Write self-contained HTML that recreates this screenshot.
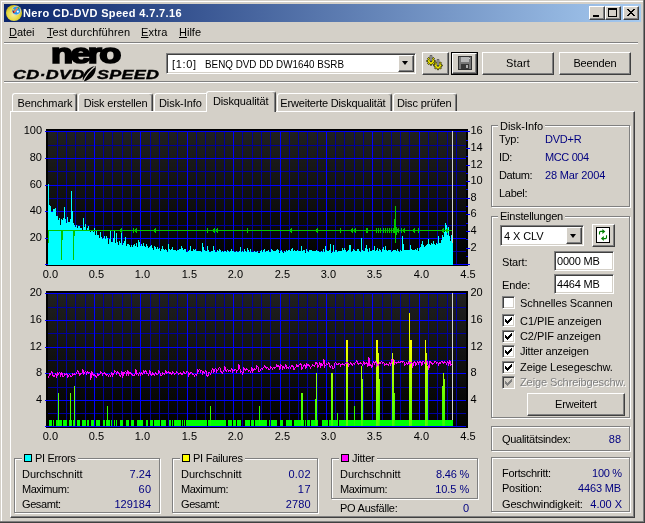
<!DOCTYPE html>
<html lang="de"><head><meta charset="utf-8"><title>Nero CD-DVD Speed 4.7.7.16</title>
<style>
html,body{margin:0;padding:0}
body{width:645px;height:523px;overflow:hidden;background:#D4D0C8;position:relative;font-family:"Liberation Sans",sans-serif;font-size:11px;color:#000}
.r,.t,.rb,.sk,.gw,.gg,.tab,.page,.arr{position:absolute}
.t{white-space:nowrap;line-height:13px;font-size:11px;will-change:opacity}
.ttl{color:#fff;font-weight:bold;font-size:11px}
.mn u{text-decoration:underline}
.nv{color:#000080}
.gt{background:rgba(212,208,200,.992)}
.nero{font-weight:bold;font-size:27px;line-height:36px;letter-spacing:-2px;-webkit-text-stroke:1.7px #000;transform:scaleX(1.34);transform-origin:0 0}
.cds{font-weight:bold;font-style:italic;font-size:13px;line-height:14px;letter-spacing:0.2px;-webkit-text-stroke:0.4px #000;transform:scaleX(1.38);transform-origin:0 0}
.rb{box-sizing:border-box;background:#D4D0C8;border:1px solid;border-color:#fff #404040 #404040 #fff;box-shadow:inset -1px -1px 0 #808080, inset 1px 1px 0 #D4D0C8}
.sk{box-sizing:border-box;background:#fff;border:1px solid;border-color:#808080 #fff #fff #808080;box-shadow:inset 1px 1px 0 #404040, inset -1px -1px 0 #D4D0C8}
.gw{box-sizing:border-box;border:1px solid #fff}
.gg{box-sizing:border-box;border:1px solid #808080}
.arr{width:0;height:0;border-left:3.5px solid transparent;border-right:3.5px solid transparent;border-top:4px solid #000}
.tab{box-sizing:border-box;background:#D4D0C8;border-top:1px solid #fff;border-left:1px solid #fff;border-right:1px solid #404040;border-radius:3px 3px 0 0;box-shadow:inset -1px 0 0 #808080}
.page{box-sizing:border-box;background:#D4D0C8;border:1px solid;border-color:#fff #404040 #404040 #fff;box-shadow:inset -1px -1px 0 #808080}
</style></head>
<body>
<div class="r" style="left:1px;top:1px;width:642px;height:1px;background:#fff"></div>
<div class="r" style="left:1px;top:1px;width:1px;height:520px;background:#fff"></div>
<div class="r" style="left:643px;top:0px;width:1px;height:522px;background:#808080"></div>
<div class="r" style="left:644px;top:0px;width:1px;height:523px;background:#404040"></div>
<div class="r" style="left:0px;top:521px;width:644px;height:1px;background:#808080"></div>
<div class="r" style="left:0px;top:522px;width:645px;height:1px;background:#404040"></div>
<div class="r" style="left:4px;top:4px;width:637px;height:18px;background:linear-gradient(to right,#0A246A,#A6CAF0)"></div>
<svg class="r" style="left:5px;top:4px" width="18" height="18" viewBox="5 4 18 18">
<defs><radialGradient id="cdg" cx="0.45" cy="0.6" r="0.6"><stop offset="0" stop-color="#f4eca0"/><stop offset="0.55" stop-color="#e8dc48"/><stop offset="1" stop-color="#c8b818"/></radialGradient></defs>
<circle cx="14" cy="13" r="8" fill="url(#cdg)"/>
<circle cx="16.3" cy="10.6" r="4.6" fill="#c8ccd8"/><circle cx="16.3" cy="10.6" r="3.8" fill="#2898e8"/>
<path d="M13.2 12.2 L17.5 6.8 L18.6 7.8 L14.6 13 Z" fill="#ff7848"/>
<path d="M17 7 L19.6 7.6 L19 9.6 Z" fill="#30a040"/>
<path d="M12.8 10 L14.6 12.6 L13.6 13.2 L12.6 11.4Z" fill="#901010"/>
<circle cx="13.4" cy="9.6" r="0.8" fill="#ffe000"/>
<circle cx="17.8" cy="11.6" r="1.1" fill="#ffffff"/>
</svg>
<span class="t ttl" style="left:23px;top:7px;letter-spacing:0.35px;">Nero CD-DVD Speed 4.7.7.16</span>
<div class="rb " style="left:589px;top:6px;width:16px;height:14px;"><div class="r" style="left:3px;top:8px;width:6px;height:2px;background:#000"></div></div>
<div class="rb " style="left:605px;top:6px;width:16px;height:14px;"><div class="r" style="left:2px;top:1px;width:9px;height:9px;box-sizing:border-box;border:1px solid #000;border-top-width:2px"></div></div>
<div class="rb " style="left:623px;top:6px;width:16px;height:14px;"><svg class="r" style="left:3px;top:2px" width="8" height="7" viewBox="0 0 8 7" shape-rendering="crispEdges"><path d="M0 0h2v1h-2zM6 0h2v1h-2zM1 1h2v1h-2zM5 1h2v1h-2zM2 2h4v1h-4zM3 3h2v1h-2zM2 4h4v1h-4zM1 5h2v1h-2zM5 5h2v1h-2zM0 6h2v1h-2zM6 6h2v1h-2z" fill="#000"/></svg></div>
<span class="t mn" style="left:9px;top:26px;letter-spacing:-0.04px;"><u>D</u>atei</span>
<span class="t mn" style="left:47px;top:26px;letter-spacing:0.07px;"><u>T</u>est durchführen</span>
<span class="t mn" style="left:141px;top:26px;letter-spacing:0.16px;"><u>E</u>xtra</span>
<span class="t mn" style="left:179px;top:26px;letter-spacing:-0.00px;"><u>H</u>ilfe</span>
<div class="r" style="left:4px;top:42px;width:634px;height:1px;background:#808080"></div>
<div class="r" style="left:4px;top:43px;width:634px;height:1px;background:#fff"></div>
<div class="r" style="left:4px;top:81px;width:634px;height:1px;background:#808080"></div>
<div class="r" style="left:4px;top:82px;width:634px;height:1px;background:#fff"></div>
<span class="t nero" style="left:51px;top:35.5px">nero</span>
<span class="t cds" style="left:13px;top:68px">CD·DVD</span>
<span class="t cds" style="left:97px;top:68px">SPEED</span>
<svg class="r" style="left:80px;top:65px" width="18" height="17" viewBox="0 0 18 17"><path d="M3 16.5 C1.5 10 6.5 2.5 15.5 1 C17 7 12 15 3 16.5Z" fill="#000"/><path d="M3 16.5 C6 10.5 10 5.5 15 1.5" stroke="#D4D0C8" stroke-width="1.2" fill="none"/></svg>
<div class="sk " style="left:166px;top:53px;width:250px;height:21px;"></div>
<span class="t mn" style="left:172px;top:58px;letter-spacing:0.66px;">[1:0]</span>
<span class="t mn" style="left:205px;top:58px;transform:scaleX(0.895);transform-origin:0 0;">BENQ DVD DD DW1640 BSRB</span>
<div class="rb " style="left:398px;top:55px;width:16px;height:17px;"><div class="arr" style="left:3px;top:5px"></div></div>
<div class="rb " style="left:422px;top:52px;width:27px;height:23px;"><svg class="r" style="left:0px;top:0px" width="25" height="21" viewBox="423 53 25 21">
<g fill="#f0e800" stroke="#282800" stroke-width="0.9"><polygon points="435.26,60.40 435.26,61.60 434.00,61.80 433.68,62.55 434.44,63.59 433.59,64.44 432.55,63.68 431.80,64.00 431.60,65.26 430.40,65.26 430.20,64.00 429.45,63.68 428.41,64.44 427.56,63.59 428.32,62.55 428.00,61.80 426.74,61.60 426.74,60.40 428.00,60.20 428.32,59.45 427.56,58.41 428.41,57.56 429.45,58.32 430.20,58.00 430.40,56.74 431.60,56.74 431.80,58.00 432.55,58.32 433.59,57.56 434.44,58.41 433.68,59.45 434.00,60.20"/><polygon points="442.26,64.90 442.26,66.10 441.00,66.30 440.68,67.05 441.44,68.09 440.59,68.94 439.55,68.18 438.80,68.50 438.60,69.76 437.40,69.76 437.20,68.50 436.45,68.18 435.41,68.94 434.56,68.09 435.32,67.05 435.00,66.30 433.74,66.10 433.74,64.90 435.00,64.70 435.32,63.95 434.56,62.91 435.41,62.06 436.45,62.82 437.20,62.50 437.40,61.24 438.60,61.24 438.80,62.50 439.55,62.82 440.59,62.06 441.44,62.91 440.68,63.95 441.00,64.70"/></g>
<circle cx="431" cy="61" r="1.3" fill="#404020"/><circle cx="438" cy="65.5" r="1.3" fill="#404020"/>
<path d="M430 55.5h2v5.5h-2z M437 59.5h2v6h-2z" fill="#a8a8a8" stroke="#383838" stroke-width=".6"/></svg></div>
<div class="r" style="left:451px;top:52px;width:27px;height:23px;box-sizing:border-box;border:1px solid #000"></div>
<div class="rb " style="left:452px;top:53px;width:25px;height:21px;"><svg class="r" style="left:5px;top:2px" width="14" height="14" viewBox="0 0 14 14" shape-rendering="crispEdges">
<rect x="0.5" y="0.5" width="13" height="13" fill="#787878" stroke="#303030"/><rect x="3" y="1" width="8" height="5" fill="#b8b8b8"/><rect x="3" y="8" width="8" height="5" fill="#383838"/><rect x="8" y="9" width="2" height="3" fill="#b0b0b0"/><rect x="11" y="2" width="1" height="1" fill="#d8d8d8"/></svg></div>
<div class="rb " style="left:482px;top:52px;width:72px;height:23px;"></div>
<span class="t mn" style="left:418.08px;width:200px;text-align:center;top:57px;letter-spacing:0.15px;">Start</span>
<div class="rb " style="left:559px;top:52px;width:72px;height:23px;"></div>
<span class="t mn" style="left:494.92px;width:200px;text-align:center;top:57px;letter-spacing:-0.16px;">Beenden</span>
<div class="tab" style="left:12px;top:93px;width:65px;height:18px"></div>
<span class="t" style="left:-55.04px;width:200px;text-align:center;top:97px;letter-spacing:-0.07px;">Benchmark</span>
<div class="tab" style="left:78px;top:93px;width:75px;height:18px"></div>
<span class="t" style="left:15.57px;width:200px;text-align:center;top:97px;letter-spacing:-0.17px;">Disk erstellen</span>
<div class="tab" style="left:154px;top:93px;width:55px;height:18px"></div>
<span class="t" style="left:80.38px;width:200px;text-align:center;top:97px;letter-spacing:-0.05px;">Disk-Info</span>
<div class="tab" style="left:277px;top:93px;width:115px;height:18px"></div>
<span class="t" style="left:232.90px;width:200px;text-align:center;top:97px;letter-spacing:-0.19px;">Erweiterte Diskqualität</span>
<div class="tab" style="left:393px;top:93px;width:64px;height:18px"></div>
<span class="t" style="left:324.20px;width:200px;text-align:center;top:97px;letter-spacing:-0.10px;">Disc prüfen</span>
<div class="page" style="left:10px;top:111px;width:625px;height:407px"></div>
<div class="tab" style="left:206px;top:91px;width:70px;height:21px"></div>
<span class="t" style="left:140.69px;width:200px;text-align:center;top:95px;letter-spacing:-0.11px;">Diskqualität</span>
<div class="r" style="left:207px;top:111px;width:67px;height:2px;background:#D4D0C8"></div>
<svg class="r" style="left:0;top:0" width="645" height="523" viewBox="0 0 645 523" shape-rendering="crispEdges">
<defs><linearGradient id="bgg" x1="0" y1="0" x2="0" y2="1"><stop offset="0" stop-color="#202020"/><stop offset="1" stop-color="#000"/></linearGradient><linearGradient id="pif" gradientUnits="userSpaceOnUse" x1="0" y1="426" x2="0" y2="326"><stop offset="0" stop-color="#00ff00"/><stop offset="0.15" stop-color="#20ff00"/><stop offset="1" stop-color="#ffff00"/></linearGradient></defs>
<rect x="46" y="129" width="422" height="137" fill="#000"/>
<rect x="48" y="131" width="418" height="134" fill="url(#bgg)"/>
<rect x="57" y="131" width="1" height="134" fill="#00009C"/>
<rect x="66" y="131" width="1" height="134" fill="#00009C"/>
<rect x="75" y="131" width="1" height="134" fill="#00009C"/>
<rect x="85" y="131" width="1" height="134" fill="#00009C"/>
<rect x="103" y="131" width="1" height="134" fill="#00009C"/>
<rect x="112" y="131" width="1" height="134" fill="#00009C"/>
<rect x="122" y="131" width="1" height="134" fill="#00009C"/>
<rect x="131" y="131" width="1" height="134" fill="#00009C"/>
<rect x="150" y="131" width="1" height="134" fill="#00009C"/>
<rect x="159" y="131" width="1" height="134" fill="#00009C"/>
<rect x="168" y="131" width="1" height="134" fill="#00009C"/>
<rect x="177" y="131" width="1" height="134" fill="#00009C"/>
<rect x="196" y="131" width="1" height="134" fill="#00009C"/>
<rect x="205" y="131" width="1" height="134" fill="#00009C"/>
<rect x="215" y="131" width="1" height="134" fill="#00009C"/>
<rect x="224" y="131" width="1" height="134" fill="#00009C"/>
<rect x="242" y="131" width="1" height="134" fill="#00009C"/>
<rect x="252" y="131" width="1" height="134" fill="#00009C"/>
<rect x="261" y="131" width="1" height="134" fill="#00009C"/>
<rect x="270" y="131" width="1" height="134" fill="#00009C"/>
<rect x="289" y="131" width="1" height="134" fill="#00009C"/>
<rect x="298" y="131" width="1" height="134" fill="#00009C"/>
<rect x="307" y="131" width="1" height="134" fill="#00009C"/>
<rect x="317" y="131" width="1" height="134" fill="#00009C"/>
<rect x="335" y="131" width="1" height="134" fill="#00009C"/>
<rect x="344" y="131" width="1" height="134" fill="#00009C"/>
<rect x="354" y="131" width="1" height="134" fill="#00009C"/>
<rect x="363" y="131" width="1" height="134" fill="#00009C"/>
<rect x="382" y="131" width="1" height="134" fill="#00009C"/>
<rect x="391" y="131" width="1" height="134" fill="#00009C"/>
<rect x="400" y="131" width="1" height="134" fill="#00009C"/>
<rect x="409" y="131" width="1" height="134" fill="#00009C"/>
<rect x="428" y="131" width="1" height="134" fill="#00009C"/>
<rect x="437" y="131" width="1" height="134" fill="#00009C"/>
<rect x="447" y="131" width="1" height="134" fill="#00009C"/>
<rect x="456" y="131" width="1" height="134" fill="#00009C"/>
<rect x="48" y="145" width="418" height="1" fill="#00009C"/>
<rect x="48" y="171" width="418" height="1" fill="#00009C"/>
<rect x="48" y="198" width="418" height="1" fill="#00009C"/>
<rect x="48" y="225" width="418" height="1" fill="#00009C"/>
<rect x="48" y="251" width="418" height="1" fill="#00009C"/>
<rect x="94" y="131" width="1" height="134" fill="#0000FF"/>
<rect x="140" y="131" width="1" height="134" fill="#0000FF"/>
<rect x="187" y="131" width="1" height="134" fill="#0000FF"/>
<rect x="233" y="131" width="1" height="134" fill="#0000FF"/>
<rect x="280" y="131" width="1" height="134" fill="#0000FF"/>
<rect x="326" y="131" width="1" height="134" fill="#0000FF"/>
<rect x="372" y="131" width="1" height="134" fill="#0000FF"/>
<rect x="419" y="131" width="1" height="134" fill="#0000FF"/>
<rect x="45" y="131" width="421" height="1" fill="#0000FF"/>
<rect x="45" y="158" width="421" height="1" fill="#0000FF"/>
<rect x="45" y="185" width="421" height="1" fill="#0000FF"/>
<rect x="45" y="211" width="421" height="1" fill="#0000FF"/>
<rect x="45" y="238" width="421" height="1" fill="#0000FF"/>
<rect x="45" y="264" width="421" height="1" fill="#0000FF"/>
<rect x="466" y="131" width="4" height="1" fill="#0000FF"/>
<rect x="466" y="140" width="2" height="1" fill="#0000FF"/>
<rect x="466" y="148" width="4" height="1" fill="#0000FF"/>
<rect x="466" y="156" width="2" height="1" fill="#0000FF"/>
<rect x="466" y="165" width="4" height="1" fill="#0000FF"/>
<rect x="466" y="173" width="2" height="1" fill="#0000FF"/>
<rect x="466" y="181" width="4" height="1" fill="#0000FF"/>
<rect x="466" y="189" width="2" height="1" fill="#0000FF"/>
<rect x="466" y="198" width="4" height="1" fill="#0000FF"/>
<rect x="466" y="206" width="2" height="1" fill="#0000FF"/>
<rect x="466" y="214" width="4" height="1" fill="#0000FF"/>
<rect x="466" y="223" width="2" height="1" fill="#0000FF"/>
<rect x="466" y="231" width="4" height="1" fill="#0000FF"/>
<rect x="466" y="239" width="2" height="1" fill="#0000FF"/>
<rect x="466" y="248" width="4" height="1" fill="#0000FF"/>
<rect x="466" y="256" width="2" height="1" fill="#0000FF"/>
<rect x="466" y="264" width="4" height="1" fill="#0000FF"/>
<path d="M48 265V184h1V205h1V206h1V212h1V212h1V209h1V209h1V208h1V216h1V216h1V220h1V218h1V225h1V219h1V220h1V218h1V207h1V219h1V223h1V217h1V222h1V222h1V219h1V191h1V211h1V223h1V225h1V227h1V225h1V228h1V226h1V226h1V228h1V228h1V230h1V218h1V227h1V224h1V230h1V228h1V226h1V231h1V232h1V231h1V231h1V232h1V228h1V235h1V230h1V235h1V235h1V238h1V232h1V237h1V239h1V238h1V236h1V239h1V236h1V238h1V244h1V239h1V231h1V242h1V242h1V238h1V230h1V243h1V233h1V242h1V245h1V241h1V243h1V232h1V245h1V243h1V241h1V237h1V246h1V244h1V244h1V245h1V247h1V245h1V247h1V245h1V244h1V246h1V243h1V247h1V240h1V242h1V246h1V244h1V246h1V243h1V246h1V247h1V244h1V246h1V248h1V247h1V246h1V245h1V248h1V250h1V246h1V247h1V249h1V247h1V249h1V248h1V251h1V249h1V246h1V249h1V250h1V249h1V250h1V252h1V244h1V249h1V250h1V249h1V247h1V250h1V250h1V250h1V251h1V250h1V250h1V249h1V249h1V246h1V248h1V250h1V249h1V249h1V252h1V252h1V251h1V250h1V246h1V251h1V251h1V249h1V250h1V249h1V251h1V251h1V251h1V251h1V251h1V252h1V243h1V247h1V250h1V251h1V251h1V246h1V250h1V252h1V252h1V251h1V251h1V246h1V250h1V252h1V252h1V250h1V251h1V249h1V250h1V252h1V251h1V252h1V251h1V251h1V252h1V250h1V251h1V252h1V251h1V249h1V251h1V251h1V252h1V252h1V251h1V252h1V252h1V251h1V247h1V252h1V251h1V252h1V249h1V251h1V252h1V248h1V250h1V252h1V249h1V252h1V252h1V252h1V251h1V252h1V252h1V251h1V253h1V253h1V251h1V250h1V252h1V250h1V249h1V252h1V251h1V251h1V250h1V252h1V252h1V249h1V250h1V251h1V251h1V251h1V250h1V249h1V250h1V253h1V251h1V250h1V252h1V253h1V251h1V252h1V250h1V251h1V250h1V250h1V251h1V249h1V248h1V251h1V250h1V251h1V251h1V250h1V251h1V251h1V251h1V246h1V251h1V250h1V250h1V253h1V249h1V251h1V252h1V250h1V250h1V250h1V251h1V251h1V251h1V251h1V250h1V251h1V251h1V252h1V252h1V251h1V252h1V249h1V252h1V246h1V250h1V251h1V251h1V250h1V244h1V253h1V252h1V245h1V252h1V250h1V250h1V252h1V251h1V251h1V251h1V251h1V248h1V250h1V248h1V250h1V252h1V251h1V250h1V245h1V245h1V252h1V251h1V249h1V250h1V251h1V251h1V249h1V249h1V251h1V252h1V238h1V250h1V251h1V251h1V248h1V245h1V249h1V252h1V248h1V251h1V251h1V250h1V250h1V246h1V251h1V250h1V248h1V251h1V249h1V250h1V252h1V249h1V247h1V250h1V246h1V250h1V251h1V250h1V250h1V250h1V252h1V251h1V250h1V250h1V250h1V251h1V249h1V251h1V252h1V250h1V251h1V236h1V244h1V250h1V250h1V250h1V250h1V250h1V250h1V245h1V249h1V250h1V250h1V250h1V249h1V250h1V248h1V251h1V248h1V247h1V244h1V241h1V245h1V247h1V246h1V245h1V244h1V239h1V244h1V245h1V243h1V244h1V241h1V244h1V245h1V243h1V244h1V236h1V243h1V243h1V240h1V235h1V237h1V232h1V223h1V225h1V235h1V227h1V236h1V241h1V235h1V243h1V265H48Z" fill="#00FFFF"/>
<rect x="48" y="230" width="404" height="1" fill="#00C800"/>
<rect x="48" y="230" width="1" height="13" fill="#00C800"/>
<rect x="61" y="230" width="1" height="30" fill="#00C800"/>
<rect x="62" y="230" width="1" height="10" fill="#00C800"/>
<rect x="73" y="230" width="1" height="30" fill="#00C800"/>
<rect x="74" y="230" width="1" height="6" fill="#00C800"/>
<rect x="395" y="206" width="1" height="37" fill="#00C800"/>
<rect x="394" y="219" width="1" height="14" fill="#00C800"/>
<rect x="396" y="227" width="1" height="8" fill="#00C800"/>
<rect x="121" y="228" width="1" height="5" fill="#00C800"/>
<rect x="120" y="229" width="1" height="3" fill="#00C800"/>
<rect x="119" y="230" width="1" height="1" fill="#00C800"/>
<rect x="133" y="228" width="1" height="5" fill="#00C800"/>
<rect x="136" y="228" width="1" height="5" fill="#00C800"/>
<rect x="135" y="229" width="1" height="3" fill="#00C800"/>
<rect x="155" y="228" width="1" height="5" fill="#00C800"/>
<rect x="154" y="229" width="1" height="3" fill="#00C800"/>
<rect x="207" y="228" width="1" height="5" fill="#00C800"/>
<rect x="205" y="230" width="1" height="1" fill="#00C800"/>
<rect x="214" y="228" width="1" height="5" fill="#00C800"/>
<rect x="213" y="229" width="1" height="3" fill="#00C800"/>
<rect x="217" y="228" width="1" height="5" fill="#00C800"/>
<rect x="216" y="229" width="1" height="3" fill="#00C800"/>
<rect x="247" y="228" width="1" height="5" fill="#00C800"/>
<rect x="291" y="228" width="1" height="5" fill="#00C800"/>
<rect x="290" y="229" width="1" height="3" fill="#00C800"/>
<rect x="289" y="230" width="1" height="1" fill="#00C800"/>
<rect x="317" y="228" width="1" height="5" fill="#00C800"/>
<rect x="316" y="229" width="1" height="3" fill="#00C800"/>
<rect x="340" y="228" width="1" height="5" fill="#00C800"/>
<rect x="352" y="228" width="1" height="5" fill="#00C800"/>
<rect x="351" y="229" width="1" height="3" fill="#00C800"/>
<rect x="355" y="228" width="1" height="5" fill="#00C800"/>
<rect x="354" y="229" width="1" height="3" fill="#00C800"/>
<rect x="353" y="230" width="1" height="1" fill="#00C800"/>
<rect x="366" y="228" width="1" height="5" fill="#00C800"/>
<rect x="367" y="228" width="1" height="5" fill="#00C800"/>
<rect x="366" y="229" width="1" height="3" fill="#00C800"/>
<rect x="376" y="228" width="1" height="5" fill="#00C800"/>
<rect x="378" y="228" width="1" height="5" fill="#00C800"/>
<rect x="380" y="228" width="1" height="5" fill="#00C800"/>
<rect x="383" y="228" width="1" height="5" fill="#00C800"/>
<rect x="385" y="228" width="1" height="5" fill="#00C800"/>
<rect x="387" y="228" width="1" height="5" fill="#00C800"/>
<rect x="389" y="228" width="1" height="5" fill="#00C800"/>
<rect x="391" y="228" width="1" height="5" fill="#00C800"/>
<rect x="393" y="228" width="1" height="5" fill="#00C800"/>
<rect x="398" y="228" width="1" height="5" fill="#00C800"/>
<rect x="397" y="229" width="1" height="3" fill="#00C800"/>
<rect x="396" y="230" width="1" height="1" fill="#00C800"/>
<rect x="401" y="228" width="1" height="5" fill="#00C800"/>
<rect x="404" y="228" width="1" height="5" fill="#00C800"/>
<rect x="403" y="229" width="1" height="3" fill="#00C800"/>
<rect x="414" y="228" width="1" height="5" fill="#00C800"/>
<rect x="413" y="229" width="1" height="3" fill="#00C800"/>
<rect x="418" y="228" width="1" height="5" fill="#00C800"/>
<rect x="416" y="230" width="1" height="1" fill="#00C800"/>
<rect x="443" y="228" width="1" height="5" fill="#00C800"/>
<rect x="442" y="229" width="1" height="3" fill="#00C800"/>
<rect x="447" y="228" width="1" height="5" fill="#00C800"/>
<rect x="446" y="229" width="1" height="3" fill="#00C800"/>
<rect x="452" y="131" width="1" height="112" fill="#D0D0D0"/>
<rect x="46" y="291" width="422" height="137" fill="#000"/>
<rect x="48" y="293" width="418" height="134" fill="url(#bgg)"/>
<rect x="57" y="293" width="1" height="134" fill="#00009C"/>
<rect x="66" y="293" width="1" height="134" fill="#00009C"/>
<rect x="75" y="293" width="1" height="134" fill="#00009C"/>
<rect x="85" y="293" width="1" height="134" fill="#00009C"/>
<rect x="103" y="293" width="1" height="134" fill="#00009C"/>
<rect x="112" y="293" width="1" height="134" fill="#00009C"/>
<rect x="122" y="293" width="1" height="134" fill="#00009C"/>
<rect x="131" y="293" width="1" height="134" fill="#00009C"/>
<rect x="150" y="293" width="1" height="134" fill="#00009C"/>
<rect x="159" y="293" width="1" height="134" fill="#00009C"/>
<rect x="168" y="293" width="1" height="134" fill="#00009C"/>
<rect x="177" y="293" width="1" height="134" fill="#00009C"/>
<rect x="196" y="293" width="1" height="134" fill="#00009C"/>
<rect x="205" y="293" width="1" height="134" fill="#00009C"/>
<rect x="215" y="293" width="1" height="134" fill="#00009C"/>
<rect x="224" y="293" width="1" height="134" fill="#00009C"/>
<rect x="242" y="293" width="1" height="134" fill="#00009C"/>
<rect x="252" y="293" width="1" height="134" fill="#00009C"/>
<rect x="261" y="293" width="1" height="134" fill="#00009C"/>
<rect x="270" y="293" width="1" height="134" fill="#00009C"/>
<rect x="289" y="293" width="1" height="134" fill="#00009C"/>
<rect x="298" y="293" width="1" height="134" fill="#00009C"/>
<rect x="307" y="293" width="1" height="134" fill="#00009C"/>
<rect x="317" y="293" width="1" height="134" fill="#00009C"/>
<rect x="335" y="293" width="1" height="134" fill="#00009C"/>
<rect x="344" y="293" width="1" height="134" fill="#00009C"/>
<rect x="354" y="293" width="1" height="134" fill="#00009C"/>
<rect x="363" y="293" width="1" height="134" fill="#00009C"/>
<rect x="382" y="293" width="1" height="134" fill="#00009C"/>
<rect x="391" y="293" width="1" height="134" fill="#00009C"/>
<rect x="400" y="293" width="1" height="134" fill="#00009C"/>
<rect x="409" y="293" width="1" height="134" fill="#00009C"/>
<rect x="428" y="293" width="1" height="134" fill="#00009C"/>
<rect x="437" y="293" width="1" height="134" fill="#00009C"/>
<rect x="447" y="293" width="1" height="134" fill="#00009C"/>
<rect x="456" y="293" width="1" height="134" fill="#00009C"/>
<rect x="48" y="307" width="418" height="1" fill="#00009C"/>
<rect x="48" y="333" width="418" height="1" fill="#00009C"/>
<rect x="48" y="360" width="418" height="1" fill="#00009C"/>
<rect x="48" y="387" width="418" height="1" fill="#00009C"/>
<rect x="48" y="413" width="418" height="1" fill="#00009C"/>
<rect x="94" y="293" width="1" height="134" fill="#0000FF"/>
<rect x="140" y="293" width="1" height="134" fill="#0000FF"/>
<rect x="187" y="293" width="1" height="134" fill="#0000FF"/>
<rect x="233" y="293" width="1" height="134" fill="#0000FF"/>
<rect x="280" y="293" width="1" height="134" fill="#0000FF"/>
<rect x="326" y="293" width="1" height="134" fill="#0000FF"/>
<rect x="372" y="293" width="1" height="134" fill="#0000FF"/>
<rect x="419" y="293" width="1" height="134" fill="#0000FF"/>
<rect x="45" y="293" width="421" height="1" fill="#0000FF"/>
<rect x="45" y="320" width="421" height="1" fill="#0000FF"/>
<rect x="45" y="347" width="421" height="1" fill="#0000FF"/>
<rect x="45" y="373" width="421" height="1" fill="#0000FF"/>
<rect x="45" y="400" width="421" height="1" fill="#0000FF"/>
<rect x="45" y="426" width="421" height="1" fill="#0000FF"/>
<rect x="49" y="420" width="3" height="6" fill="#00FF00"/>
<rect x="53" y="420" width="1" height="6" fill="#00FF00"/>
<rect x="56" y="420" width="6" height="6" fill="#00FF00"/>
<rect x="63" y="420" width="4" height="6" fill="#00FF00"/>
<rect x="69" y="420" width="3" height="6" fill="#00FF00"/>
<rect x="73" y="420" width="2" height="6" fill="#00FF00"/>
<rect x="77" y="420" width="3" height="6" fill="#00FF00"/>
<rect x="82" y="420" width="4" height="6" fill="#00FF00"/>
<rect x="87" y="420" width="2" height="6" fill="#00FF00"/>
<rect x="91" y="420" width="3" height="6" fill="#00FF00"/>
<rect x="96" y="420" width="4" height="6" fill="#00FF00"/>
<rect x="103" y="420" width="2" height="6" fill="#00FF00"/>
<rect x="106" y="420" width="4" height="6" fill="#00FF00"/>
<rect x="111" y="420" width="1" height="6" fill="#00FF00"/>
<rect x="114" y="420" width="1" height="6" fill="#00FF00"/>
<rect x="116" y="420" width="1" height="6" fill="#00FF00"/>
<rect x="120" y="420" width="3" height="6" fill="#00FF00"/>
<rect x="126" y="420" width="3" height="6" fill="#00FF00"/>
<rect x="131" y="420" width="3" height="6" fill="#00FF00"/>
<rect x="137" y="420" width="6" height="6" fill="#00FF00"/>
<rect x="146" y="420" width="2" height="6" fill="#00FF00"/>
<rect x="150" y="420" width="3" height="6" fill="#00FF00"/>
<rect x="154" y="420" width="6" height="6" fill="#00FF00"/>
<rect x="161" y="420" width="5" height="6" fill="#00FF00"/>
<rect x="169" y="420" width="2" height="6" fill="#00FF00"/>
<rect x="172" y="420" width="1" height="6" fill="#00FF00"/>
<rect x="174" y="420" width="7" height="6" fill="#00FF00"/>
<rect x="182" y="420" width="1" height="6" fill="#00FF00"/>
<rect x="184" y="420" width="1" height="6" fill="#00FF00"/>
<rect x="186" y="420" width="21" height="6" fill="#00FF00"/>
<rect x="208" y="420" width="18" height="6" fill="#00FF00"/>
<rect x="228" y="420" width="4" height="6" fill="#00FF00"/>
<rect x="233" y="420" width="3" height="6" fill="#00FF00"/>
<rect x="237" y="420" width="4" height="6" fill="#00FF00"/>
<rect x="245" y="420" width="5" height="6" fill="#00FF00"/>
<rect x="251" y="420" width="3" height="6" fill="#00FF00"/>
<rect x="255" y="420" width="12" height="6" fill="#00FF00"/>
<rect x="269" y="420" width="1" height="6" fill="#00FF00"/>
<rect x="271" y="420" width="6" height="6" fill="#00FF00"/>
<rect x="280" y="420" width="3" height="6" fill="#00FF00"/>
<rect x="286" y="420" width="6" height="6" fill="#00FF00"/>
<rect x="294" y="420" width="10" height="6" fill="#00FF00"/>
<rect x="305" y="420" width="1" height="6" fill="#00FF00"/>
<rect x="307" y="420" width="3" height="6" fill="#00FF00"/>
<rect x="311" y="420" width="4" height="6" fill="#00FF00"/>
<rect x="316" y="420" width="2" height="6" fill="#00FF00"/>
<rect x="322" y="420" width="6" height="6" fill="#00FF00"/>
<rect x="329" y="420" width="8" height="6" fill="#00FF00"/>
<rect x="339" y="420" width="113" height="6" fill="#00FF00"/>
<defs><linearGradient id="pf2" x1="0" y1="1" x2="0" y2="0"><stop offset="0" stop-color="#0cff00"/><stop offset="1" stop-color="#27ff00"/></linearGradient><linearGradient id="pf3" x1="0" y1="1" x2="0" y2="0"><stop offset="0" stop-color="#12ff00"/><stop offset="1" stop-color="#3bff00"/></linearGradient><linearGradient id="pf4" x1="0" y1="1" x2="0" y2="0"><stop offset="0" stop-color="#18ff00"/><stop offset="1" stop-color="#4fff00"/></linearGradient><linearGradient id="pf5" x1="0" y1="1" x2="0" y2="0"><stop offset="0" stop-color="#1eff00"/><stop offset="1" stop-color="#63ff00"/></linearGradient><linearGradient id="pf6" x1="0" y1="1" x2="0" y2="0"><stop offset="0" stop-color="#24ff00"/><stop offset="1" stop-color="#76ff00"/></linearGradient><linearGradient id="pf7" x1="0" y1="1" x2="0" y2="0"><stop offset="0" stop-color="#2aff00"/><stop offset="1" stop-color="#8aff00"/></linearGradient><linearGradient id="pf8" x1="0" y1="1" x2="0" y2="0"><stop offset="0" stop-color="#30ff00"/><stop offset="1" stop-color="#9eff00"/></linearGradient><linearGradient id="pf9" x1="0" y1="1" x2="0" y2="0"><stop offset="0" stop-color="#36ff00"/><stop offset="1" stop-color="#b2ff00"/></linearGradient><linearGradient id="pf10" x1="0" y1="1" x2="0" y2="0"><stop offset="0" stop-color="#3cff00"/><stop offset="1" stop-color="#c5ff00"/></linearGradient><linearGradient id="pf11" x1="0" y1="1" x2="0" y2="0"><stop offset="0" stop-color="#42ff00"/><stop offset="1" stop-color="#d9ff00"/></linearGradient><linearGradient id="pf13" x1="0" y1="1" x2="0" y2="0"><stop offset="0" stop-color="#4eff00"/><stop offset="1" stop-color="#ffff00"/></linearGradient><linearGradient id="pf17" x1="0" y1="1" x2="0" y2="0"><stop offset="0" stop-color="#66ff00"/><stop offset="1" stop-color="#ffff00"/></linearGradient></defs>
<rect x="58" y="393" width="1" height="33" fill="url(#pf5)"/>
<rect x="70" y="393" width="1" height="33" fill="url(#pf5)"/>
<rect x="74" y="386" width="1" height="40" fill="url(#pf6)"/>
<rect x="107" y="406" width="1" height="20" fill="url(#pf3)"/>
<rect x="210" y="406" width="1" height="20" fill="url(#pf3)"/>
<rect x="259" y="406" width="1" height="20" fill="url(#pf3)"/>
<rect x="301" y="393" width="1" height="33" fill="url(#pf5)"/>
<rect x="302" y="393" width="1" height="33" fill="url(#pf5)"/>
<rect x="315" y="399" width="1" height="27" fill="url(#pf4)"/>
<rect x="316" y="373" width="1" height="53" fill="url(#pf8)"/>
<rect x="331" y="373" width="1" height="53" fill="url(#pf8)"/>
<rect x="332" y="373" width="1" height="53" fill="url(#pf8)"/>
<rect x="337" y="413" width="1" height="13" fill="url(#pf2)"/>
<rect x="346" y="340" width="1" height="86" fill="url(#pf13)"/>
<rect x="347" y="340" width="1" height="86" fill="url(#pf13)"/>
<rect x="354" y="406" width="1" height="20" fill="url(#pf3)"/>
<rect x="361" y="366" width="1" height="60" fill="url(#pf9)"/>
<rect x="362" y="379" width="1" height="47" fill="url(#pf7)"/>
<rect x="376" y="340" width="1" height="86" fill="url(#pf13)"/>
<rect x="377" y="340" width="1" height="86" fill="url(#pf13)"/>
<rect x="378" y="353" width="1" height="73" fill="url(#pf11)"/>
<rect x="379" y="379" width="1" height="47" fill="url(#pf7)"/>
<rect x="392" y="353" width="1" height="73" fill="url(#pf11)"/>
<rect x="393" y="360" width="1" height="66" fill="url(#pf10)"/>
<rect x="394" y="393" width="1" height="33" fill="url(#pf5)"/>
<rect x="409" y="313" width="1" height="113" fill="url(#pf17)"/>
<rect x="410" y="340" width="1" height="86" fill="url(#pf13)"/>
<rect x="411" y="340" width="1" height="86" fill="url(#pf13)"/>
<rect x="425" y="340" width="1" height="86" fill="url(#pf13)"/>
<rect x="426" y="353" width="1" height="73" fill="url(#pf11)"/>
<rect x="427" y="366" width="1" height="60" fill="url(#pf9)"/>
<rect x="442" y="386" width="1" height="40" fill="url(#pf6)"/>
<rect x="443" y="373" width="1" height="53" fill="url(#pf8)"/>
<rect x="444" y="379" width="1" height="47" fill="url(#pf7)"/>
<rect x="48" y="376" width="1" height="1" fill="#FF00FF"/>
<rect x="48" y="377" width="1" height="1" fill="#FF00FF"/>
<rect x="49" y="373" width="1" height="3" fill="#FF00FF"/>
<rect x="50" y="373" width="1" height="1" fill="#FF00FF"/>
<rect x="50" y="374" width="1" height="1" fill="#FF00FF"/>
<rect x="51" y="371" width="1" height="2" fill="#FF00FF"/>
<rect x="52" y="372" width="1" height="3" fill="#FF00FF"/>
<rect x="52" y="375" width="1" height="1" fill="#FF00FF"/>
<rect x="53" y="375" width="1" height="2" fill="#FF00FF"/>
<rect x="54" y="375" width="1" height="1" fill="#FF00FF"/>
<rect x="54" y="376" width="1" height="1" fill="#FF00FF"/>
<rect x="55" y="373" width="1" height="2" fill="#FF00FF"/>
<rect x="56" y="374" width="1" height="3" fill="#FF00FF"/>
<rect x="56" y="377" width="1" height="1" fill="#FF00FF"/>
<rect x="57" y="372" width="1" height="4" fill="#FF00FF"/>
<rect x="58" y="373" width="1" height="1" fill="#FF00FF"/>
<rect x="58" y="374" width="1" height="1" fill="#FF00FF"/>
<rect x="59" y="372" width="1" height="1" fill="#FF00FF"/>
<rect x="60" y="373" width="1" height="3" fill="#FF00FF"/>
<rect x="60" y="376" width="1" height="1" fill="#FF00FF"/>
<rect x="61" y="372" width="1" height="3" fill="#FF00FF"/>
<rect x="62" y="373" width="1" height="3" fill="#FF00FF"/>
<rect x="62" y="376" width="1" height="1" fill="#FF00FF"/>
<rect x="63" y="376" width="1" height="1" fill="#FF00FF"/>
<rect x="64" y="373" width="1" height="3" fill="#FF00FF"/>
<rect x="64" y="374" width="1" height="1" fill="#FF00FF"/>
<rect x="65" y="374" width="1" height="1" fill="#FF00FF"/>
<rect x="66" y="373" width="1" height="1" fill="#FF00FF"/>
<rect x="66" y="374" width="1" height="1" fill="#FF00FF"/>
<rect x="67" y="374" width="1" height="4" fill="#FF00FF"/>
<rect x="68" y="375" width="1" height="2" fill="#FF00FF"/>
<rect x="68" y="376" width="1" height="1" fill="#FF00FF"/>
<rect x="69" y="374" width="1" height="1" fill="#FF00FF"/>
<rect x="70" y="375" width="1" height="1" fill="#FF00FF"/>
<rect x="70" y="376" width="1" height="1" fill="#FF00FF"/>
<rect x="71" y="376" width="1" height="1" fill="#FF00FF"/>
<rect x="72" y="373" width="1" height="3" fill="#FF00FF"/>
<rect x="72" y="374" width="1" height="1" fill="#FF00FF"/>
<rect x="73" y="374" width="1" height="1" fill="#FF00FF"/>
<rect x="74" y="373" width="1" height="1" fill="#FF00FF"/>
<rect x="74" y="374" width="1" height="1" fill="#FF00FF"/>
<rect x="75" y="374" width="1" height="1" fill="#FF00FF"/>
<rect x="76" y="372" width="1" height="2" fill="#FF00FF"/>
<rect x="76" y="373" width="1" height="1" fill="#FF00FF"/>
<rect x="77" y="370" width="1" height="2" fill="#FF00FF"/>
<rect x="78" y="371" width="1" height="2" fill="#FF00FF"/>
<rect x="78" y="373" width="1" height="1" fill="#FF00FF"/>
<rect x="79" y="373" width="1" height="3" fill="#FF00FF"/>
<rect x="80" y="373" width="1" height="2" fill="#FF00FF"/>
<rect x="80" y="374" width="1" height="1" fill="#FF00FF"/>
<rect x="81" y="373" width="1" height="1" fill="#FF00FF"/>
<rect x="82" y="369" width="1" height="4" fill="#FF00FF"/>
<rect x="82" y="370" width="1" height="1" fill="#FF00FF"/>
<rect x="83" y="370" width="1" height="5" fill="#FF00FF"/>
<rect x="84" y="372" width="1" height="2" fill="#FF00FF"/>
<rect x="84" y="373" width="1" height="1" fill="#FF00FF"/>
<rect x="85" y="371" width="1" height="1" fill="#FF00FF"/>
<rect x="86" y="372" width="1" height="2" fill="#FF00FF"/>
<rect x="86" y="374" width="1" height="1" fill="#FF00FF"/>
<rect x="87" y="371" width="1" height="2" fill="#FF00FF"/>
<rect x="88" y="372" width="1" height="1" fill="#FF00FF"/>
<rect x="88" y="373" width="1" height="1" fill="#FF00FF"/>
<rect x="89" y="372" width="1" height="1" fill="#FF00FF"/>
<rect x="90" y="373" width="1" height="6" fill="#FF00FF"/>
<rect x="90" y="379" width="1" height="1" fill="#FF00FF"/>
<rect x="91" y="371" width="1" height="7" fill="#FF00FF"/>
<rect x="92" y="372" width="1" height="2" fill="#FF00FF"/>
<rect x="92" y="374" width="1" height="1" fill="#FF00FF"/>
<rect x="93" y="374" width="1" height="2" fill="#FF00FF"/>
<rect x="94" y="374" width="1" height="1" fill="#FF00FF"/>
<rect x="94" y="375" width="1" height="1" fill="#FF00FF"/>
<rect x="95" y="375" width="1" height="2" fill="#FF00FF"/>
<rect x="96" y="376" width="1" height="1" fill="#FF00FF"/>
<rect x="96" y="377" width="1" height="1" fill="#FF00FF"/>
<rect x="97" y="373" width="1" height="3" fill="#FF00FF"/>
<rect x="98" y="374" width="1" height="1" fill="#FF00FF"/>
<rect x="98" y="375" width="1" height="1" fill="#FF00FF"/>
<rect x="99" y="374" width="1" height="1" fill="#FF00FF"/>
<rect x="100" y="371" width="1" height="3" fill="#FF00FF"/>
<rect x="100" y="372" width="1" height="1" fill="#FF00FF"/>
<rect x="101" y="372" width="1" height="1" fill="#FF00FF"/>
<rect x="102" y="373" width="1" height="2" fill="#FF00FF"/>
<rect x="102" y="375" width="1" height="1" fill="#FF00FF"/>
<rect x="103" y="373" width="1" height="1" fill="#FF00FF"/>
<rect x="104" y="372" width="1" height="1" fill="#FF00FF"/>
<rect x="104" y="373" width="1" height="1" fill="#FF00FF"/>
<rect x="105" y="373" width="1" height="2" fill="#FF00FF"/>
<rect x="106" y="374" width="1" height="1" fill="#FF00FF"/>
<rect x="106" y="375" width="1" height="1" fill="#FF00FF"/>
<rect x="107" y="374" width="1" height="1" fill="#FF00FF"/>
<rect x="108" y="375" width="1" height="1" fill="#FF00FF"/>
<rect x="108" y="376" width="1" height="1" fill="#FF00FF"/>
<rect x="109" y="374" width="1" height="1" fill="#FF00FF"/>
<rect x="110" y="375" width="1" height="1" fill="#FF00FF"/>
<rect x="110" y="376" width="1" height="1" fill="#FF00FF"/>
<rect x="111" y="372" width="1" height="3" fill="#FF00FF"/>
<rect x="112" y="373" width="1" height="3" fill="#FF00FF"/>
<rect x="112" y="376" width="1" height="1" fill="#FF00FF"/>
<rect x="113" y="373" width="1" height="2" fill="#FF00FF"/>
<rect x="114" y="370" width="1" height="3" fill="#FF00FF"/>
<rect x="114" y="371" width="1" height="1" fill="#FF00FF"/>
<rect x="115" y="371" width="1" height="1" fill="#FF00FF"/>
<rect x="116" y="372" width="1" height="2" fill="#FF00FF"/>
<rect x="116" y="374" width="1" height="1" fill="#FF00FF"/>
<rect x="117" y="371" width="1" height="2" fill="#FF00FF"/>
<rect x="118" y="372" width="1" height="1" fill="#FF00FF"/>
<rect x="118" y="373" width="1" height="1" fill="#FF00FF"/>
<rect x="119" y="373" width="1" height="3" fill="#FF00FF"/>
<rect x="120" y="375" width="1" height="1" fill="#FF00FF"/>
<rect x="120" y="376" width="1" height="1" fill="#FF00FF"/>
<rect x="121" y="371" width="1" height="4" fill="#FF00FF"/>
<rect x="122" y="372" width="1" height="5" fill="#FF00FF"/>
<rect x="122" y="377" width="1" height="1" fill="#FF00FF"/>
<rect x="123" y="372" width="1" height="4" fill="#FF00FF"/>
<rect x="124" y="372" width="1" height="1" fill="#FF00FF"/>
<rect x="124" y="373" width="1" height="1" fill="#FF00FF"/>
<rect x="125" y="371" width="1" height="1" fill="#FF00FF"/>
<rect x="126" y="372" width="1" height="3" fill="#FF00FF"/>
<rect x="126" y="375" width="1" height="1" fill="#FF00FF"/>
<rect x="127" y="370" width="1" height="4" fill="#FF00FF"/>
<rect x="128" y="371" width="1" height="4" fill="#FF00FF"/>
<rect x="128" y="375" width="1" height="1" fill="#FF00FF"/>
<rect x="129" y="372" width="1" height="2" fill="#FF00FF"/>
<rect x="130" y="372" width="1" height="1" fill="#FF00FF"/>
<rect x="130" y="373" width="1" height="1" fill="#FF00FF"/>
<rect x="131" y="373" width="1" height="2" fill="#FF00FF"/>
<rect x="132" y="374" width="1" height="1" fill="#FF00FF"/>
<rect x="132" y="375" width="1" height="1" fill="#FF00FF"/>
<rect x="133" y="375" width="1" height="1" fill="#FF00FF"/>
<rect x="134" y="374" width="1" height="1" fill="#FF00FF"/>
<rect x="134" y="375" width="1" height="1" fill="#FF00FF"/>
<rect x="135" y="369" width="1" height="5" fill="#FF00FF"/>
<rect x="136" y="370" width="1" height="4" fill="#FF00FF"/>
<rect x="136" y="374" width="1" height="1" fill="#FF00FF"/>
<rect x="137" y="373" width="1" height="1" fill="#FF00FF"/>
<rect x="138" y="374" width="1" height="1" fill="#FF00FF"/>
<rect x="138" y="375" width="1" height="1" fill="#FF00FF"/>
<rect x="139" y="372" width="1" height="2" fill="#FF00FF"/>
<rect x="140" y="373" width="1" height="2" fill="#FF00FF"/>
<rect x="140" y="375" width="1" height="1" fill="#FF00FF"/>
<rect x="141" y="372" width="1" height="2" fill="#FF00FF"/>
<rect x="142" y="373" width="1" height="1" fill="#FF00FF"/>
<rect x="142" y="374" width="1" height="1" fill="#FF00FF"/>
<rect x="143" y="370" width="1" height="3" fill="#FF00FF"/>
<rect x="144" y="371" width="1" height="2" fill="#FF00FF"/>
<rect x="144" y="373" width="1" height="1" fill="#FF00FF"/>
<rect x="145" y="370" width="1" height="2" fill="#FF00FF"/>
<rect x="146" y="371" width="1" height="2" fill="#FF00FF"/>
<rect x="146" y="373" width="1" height="1" fill="#FF00FF"/>
<rect x="147" y="373" width="1" height="1" fill="#FF00FF"/>
<rect x="148" y="374" width="1" height="1" fill="#FF00FF"/>
<rect x="148" y="375" width="1" height="1" fill="#FF00FF"/>
<rect x="149" y="370" width="1" height="4" fill="#FF00FF"/>
<rect x="150" y="371" width="1" height="3" fill="#FF00FF"/>
<rect x="150" y="374" width="1" height="1" fill="#FF00FF"/>
<rect x="151" y="374" width="1" height="2" fill="#FF00FF"/>
<rect x="152" y="372" width="1" height="3" fill="#FF00FF"/>
<rect x="152" y="373" width="1" height="1" fill="#FF00FF"/>
<rect x="153" y="373" width="1" height="2" fill="#FF00FF"/>
<rect x="154" y="374" width="1" height="1" fill="#FF00FF"/>
<rect x="154" y="375" width="1" height="1" fill="#FF00FF"/>
<rect x="155" y="372" width="1" height="2" fill="#FF00FF"/>
<rect x="156" y="373" width="1" height="1" fill="#FF00FF"/>
<rect x="156" y="374" width="1" height="1" fill="#FF00FF"/>
<rect x="157" y="374" width="1" height="1" fill="#FF00FF"/>
<rect x="158" y="370" width="1" height="4" fill="#FF00FF"/>
<rect x="158" y="371" width="1" height="1" fill="#FF00FF"/>
<rect x="159" y="371" width="1" height="2" fill="#FF00FF"/>
<rect x="160" y="373" width="1" height="2" fill="#FF00FF"/>
<rect x="160" y="375" width="1" height="1" fill="#FF00FF"/>
<rect x="161" y="375" width="1" height="1" fill="#FF00FF"/>
<rect x="162" y="372" width="1" height="3" fill="#FF00FF"/>
<rect x="162" y="373" width="1" height="1" fill="#FF00FF"/>
<rect x="163" y="373" width="1" height="1" fill="#FF00FF"/>
<rect x="164" y="373" width="1" height="1" fill="#FF00FF"/>
<rect x="164" y="374" width="1" height="1" fill="#FF00FF"/>
<rect x="165" y="370" width="1" height="3" fill="#FF00FF"/>
<rect x="166" y="371" width="1" height="2" fill="#FF00FF"/>
<rect x="166" y="373" width="1" height="1" fill="#FF00FF"/>
<rect x="167" y="372" width="1" height="1" fill="#FF00FF"/>
<rect x="168" y="371" width="1" height="1" fill="#FF00FF"/>
<rect x="168" y="372" width="1" height="1" fill="#FF00FF"/>
<rect x="169" y="372" width="1" height="2" fill="#FF00FF"/>
<rect x="170" y="372" width="1" height="1" fill="#FF00FF"/>
<rect x="170" y="373" width="1" height="1" fill="#FF00FF"/>
<rect x="171" y="373" width="1" height="2" fill="#FF00FF"/>
<rect x="172" y="371" width="1" height="3" fill="#FF00FF"/>
<rect x="172" y="372" width="1" height="1" fill="#FF00FF"/>
<rect x="173" y="372" width="1" height="1" fill="#FF00FF"/>
<rect x="174" y="373" width="1" height="1" fill="#FF00FF"/>
<rect x="174" y="374" width="1" height="1" fill="#FF00FF"/>
<rect x="175" y="373" width="1" height="1" fill="#FF00FF"/>
<rect x="176" y="371" width="1" height="2" fill="#FF00FF"/>
<rect x="176" y="372" width="1" height="1" fill="#FF00FF"/>
<rect x="177" y="372" width="1" height="1" fill="#FF00FF"/>
<rect x="178" y="373" width="1" height="1" fill="#FF00FF"/>
<rect x="178" y="374" width="1" height="1" fill="#FF00FF"/>
<rect x="179" y="373" width="1" height="1" fill="#FF00FF"/>
<rect x="180" y="372" width="1" height="1" fill="#FF00FF"/>
<rect x="180" y="373" width="1" height="1" fill="#FF00FF"/>
<rect x="181" y="373" width="1" height="2" fill="#FF00FF"/>
<rect x="182" y="373" width="1" height="1" fill="#FF00FF"/>
<rect x="182" y="374" width="1" height="1" fill="#FF00FF"/>
<rect x="183" y="371" width="1" height="2" fill="#FF00FF"/>
<rect x="184" y="372" width="1" height="1" fill="#FF00FF"/>
<rect x="184" y="373" width="1" height="1" fill="#FF00FF"/>
<rect x="185" y="373" width="1" height="1" fill="#FF00FF"/>
<rect x="186" y="371" width="1" height="2" fill="#FF00FF"/>
<rect x="186" y="372" width="1" height="1" fill="#FF00FF"/>
<rect x="187" y="371" width="1" height="1" fill="#FF00FF"/>
<rect x="188" y="372" width="1" height="4" fill="#FF00FF"/>
<rect x="188" y="376" width="1" height="1" fill="#FF00FF"/>
<rect x="189" y="373" width="1" height="2" fill="#FF00FF"/>
<rect x="190" y="372" width="1" height="1" fill="#FF00FF"/>
<rect x="190" y="373" width="1" height="1" fill="#FF00FF"/>
<rect x="191" y="372" width="1" height="1" fill="#FF00FF"/>
<rect x="192" y="373" width="1" height="1" fill="#FF00FF"/>
<rect x="192" y="374" width="1" height="1" fill="#FF00FF"/>
<rect x="193" y="374" width="1" height="1" fill="#FF00FF"/>
<rect x="194" y="375" width="1" height="1" fill="#FF00FF"/>
<rect x="194" y="376" width="1" height="1" fill="#FF00FF"/>
<rect x="195" y="374" width="1" height="1" fill="#FF00FF"/>
<rect x="196" y="374" width="1" height="1" fill="#FF00FF"/>
<rect x="196" y="375" width="1" height="1" fill="#FF00FF"/>
<rect x="197" y="369" width="1" height="5" fill="#FF00FF"/>
<rect x="198" y="370" width="1" height="1" fill="#FF00FF"/>
<rect x="198" y="371" width="1" height="1" fill="#FF00FF"/>
<rect x="199" y="369" width="1" height="1" fill="#FF00FF"/>
<rect x="200" y="370" width="1" height="2" fill="#FF00FF"/>
<rect x="200" y="372" width="1" height="1" fill="#FF00FF"/>
<rect x="201" y="370" width="1" height="1" fill="#FF00FF"/>
<rect x="202" y="371" width="1" height="3" fill="#FF00FF"/>
<rect x="202" y="374" width="1" height="1" fill="#FF00FF"/>
<rect x="203" y="371" width="1" height="2" fill="#FF00FF"/>
<rect x="204" y="372" width="1" height="1" fill="#FF00FF"/>
<rect x="204" y="373" width="1" height="1" fill="#FF00FF"/>
<rect x="205" y="370" width="1" height="2" fill="#FF00FF"/>
<rect x="206" y="371" width="1" height="4" fill="#FF00FF"/>
<rect x="206" y="375" width="1" height="1" fill="#FF00FF"/>
<rect x="207" y="375" width="1" height="2" fill="#FF00FF"/>
<rect x="208" y="372" width="1" height="4" fill="#FF00FF"/>
<rect x="208" y="373" width="1" height="1" fill="#FF00FF"/>
<rect x="209" y="372" width="1" height="1" fill="#FF00FF"/>
<rect x="210" y="373" width="1" height="1" fill="#FF00FF"/>
<rect x="210" y="374" width="1" height="1" fill="#FF00FF"/>
<rect x="211" y="370" width="1" height="3" fill="#FF00FF"/>
<rect x="212" y="368" width="1" height="2" fill="#FF00FF"/>
<rect x="212" y="369" width="1" height="1" fill="#FF00FF"/>
<rect x="213" y="369" width="1" height="4" fill="#FF00FF"/>
<rect x="214" y="369" width="1" height="3" fill="#FF00FF"/>
<rect x="214" y="370" width="1" height="1" fill="#FF00FF"/>
<rect x="215" y="368" width="1" height="1" fill="#FF00FF"/>
<rect x="216" y="369" width="1" height="3" fill="#FF00FF"/>
<rect x="216" y="372" width="1" height="1" fill="#FF00FF"/>
<rect x="217" y="370" width="1" height="1" fill="#FF00FF"/>
<rect x="218" y="368" width="1" height="2" fill="#FF00FF"/>
<rect x="218" y="369" width="1" height="1" fill="#FF00FF"/>
<rect x="219" y="367" width="1" height="1" fill="#FF00FF"/>
<rect x="220" y="368" width="1" height="3" fill="#FF00FF"/>
<rect x="220" y="371" width="1" height="1" fill="#FF00FF"/>
<rect x="221" y="371" width="1" height="2" fill="#FF00FF"/>
<rect x="222" y="372" width="1" height="1" fill="#FF00FF"/>
<rect x="222" y="373" width="1" height="1" fill="#FF00FF"/>
<rect x="223" y="370" width="1" height="2" fill="#FF00FF"/>
<rect x="224" y="366" width="1" height="4" fill="#FF00FF"/>
<rect x="224" y="367" width="1" height="1" fill="#FF00FF"/>
<rect x="225" y="367" width="1" height="4" fill="#FF00FF"/>
<rect x="226" y="370" width="1" height="1" fill="#FF00FF"/>
<rect x="226" y="371" width="1" height="1" fill="#FF00FF"/>
<rect x="227" y="369" width="1" height="1" fill="#FF00FF"/>
<rect x="228" y="370" width="1" height="1" fill="#FF00FF"/>
<rect x="228" y="371" width="1" height="1" fill="#FF00FF"/>
<rect x="229" y="370" width="1" height="1" fill="#FF00FF"/>
<rect x="230" y="370" width="1" height="1" fill="#FF00FF"/>
<rect x="230" y="371" width="1" height="1" fill="#FF00FF"/>
<rect x="231" y="368" width="1" height="2" fill="#FF00FF"/>
<rect x="232" y="369" width="1" height="3" fill="#FF00FF"/>
<rect x="232" y="372" width="1" height="1" fill="#FF00FF"/>
<rect x="233" y="370" width="1" height="1" fill="#FF00FF"/>
<rect x="234" y="369" width="1" height="1" fill="#FF00FF"/>
<rect x="234" y="370" width="1" height="1" fill="#FF00FF"/>
<rect x="235" y="369" width="1" height="1" fill="#FF00FF"/>
<rect x="236" y="370" width="1" height="2" fill="#FF00FF"/>
<rect x="236" y="372" width="1" height="1" fill="#FF00FF"/>
<rect x="237" y="370" width="1" height="1" fill="#FF00FF"/>
<rect x="238" y="364" width="1" height="6" fill="#FF00FF"/>
<rect x="238" y="365" width="1" height="1" fill="#FF00FF"/>
<rect x="239" y="365" width="1" height="4" fill="#FF00FF"/>
<rect x="240" y="369" width="1" height="3" fill="#FF00FF"/>
<rect x="240" y="372" width="1" height="1" fill="#FF00FF"/>
<rect x="241" y="371" width="1" height="1" fill="#FF00FF"/>
<rect x="242" y="372" width="1" height="2" fill="#FF00FF"/>
<rect x="242" y="374" width="1" height="1" fill="#FF00FF"/>
<rect x="243" y="367" width="1" height="6" fill="#FF00FF"/>
<rect x="244" y="368" width="1" height="1" fill="#FF00FF"/>
<rect x="244" y="369" width="1" height="1" fill="#FF00FF"/>
<rect x="245" y="369" width="1" height="2" fill="#FF00FF"/>
<rect x="246" y="368" width="1" height="2" fill="#FF00FF"/>
<rect x="246" y="369" width="1" height="1" fill="#FF00FF"/>
<rect x="247" y="369" width="1" height="1" fill="#FF00FF"/>
<rect x="248" y="370" width="1" height="1" fill="#FF00FF"/>
<rect x="248" y="371" width="1" height="1" fill="#FF00FF"/>
<rect x="249" y="370" width="1" height="1" fill="#FF00FF"/>
<rect x="250" y="371" width="1" height="1" fill="#FF00FF"/>
<rect x="250" y="372" width="1" height="1" fill="#FF00FF"/>
<rect x="251" y="367" width="1" height="4" fill="#FF00FF"/>
<rect x="252" y="368" width="1" height="4" fill="#FF00FF"/>
<rect x="252" y="372" width="1" height="1" fill="#FF00FF"/>
<rect x="253" y="369" width="1" height="2" fill="#FF00FF"/>
<rect x="254" y="368" width="1" height="1" fill="#FF00FF"/>
<rect x="254" y="369" width="1" height="1" fill="#FF00FF"/>
<rect x="255" y="369" width="1" height="1" fill="#FF00FF"/>
<rect x="256" y="365" width="1" height="4" fill="#FF00FF"/>
<rect x="256" y="366" width="1" height="1" fill="#FF00FF"/>
<rect x="257" y="366" width="1" height="1" fill="#FF00FF"/>
<rect x="258" y="367" width="1" height="4" fill="#FF00FF"/>
<rect x="258" y="371" width="1" height="1" fill="#FF00FF"/>
<rect x="259" y="371" width="1" height="1" fill="#FF00FF"/>
<rect x="260" y="369" width="1" height="2" fill="#FF00FF"/>
<rect x="260" y="370" width="1" height="1" fill="#FF00FF"/>
<rect x="261" y="368" width="1" height="1" fill="#FF00FF"/>
<rect x="262" y="368" width="1" height="1" fill="#FF00FF"/>
<rect x="262" y="369" width="1" height="1" fill="#FF00FF"/>
<rect x="263" y="367" width="1" height="1" fill="#FF00FF"/>
<rect x="264" y="365" width="1" height="2" fill="#FF00FF"/>
<rect x="264" y="366" width="1" height="1" fill="#FF00FF"/>
<rect x="265" y="366" width="1" height="2" fill="#FF00FF"/>
<rect x="266" y="367" width="1" height="1" fill="#FF00FF"/>
<rect x="266" y="368" width="1" height="1" fill="#FF00FF"/>
<rect x="267" y="367" width="1" height="1" fill="#FF00FF"/>
<rect x="268" y="368" width="1" height="1" fill="#FF00FF"/>
<rect x="268" y="369" width="1" height="1" fill="#FF00FF"/>
<rect x="269" y="369" width="1" height="1" fill="#FF00FF"/>
<rect x="270" y="366" width="1" height="3" fill="#FF00FF"/>
<rect x="270" y="367" width="1" height="1" fill="#FF00FF"/>
<rect x="271" y="367" width="1" height="1" fill="#FF00FF"/>
<rect x="272" y="368" width="1" height="1" fill="#FF00FF"/>
<rect x="272" y="369" width="1" height="1" fill="#FF00FF"/>
<rect x="273" y="367" width="1" height="1" fill="#FF00FF"/>
<rect x="274" y="367" width="1" height="1" fill="#FF00FF"/>
<rect x="274" y="368" width="1" height="1" fill="#FF00FF"/>
<rect x="275" y="367" width="1" height="1" fill="#FF00FF"/>
<rect x="276" y="364" width="1" height="3" fill="#FF00FF"/>
<rect x="276" y="365" width="1" height="1" fill="#FF00FF"/>
<rect x="277" y="365" width="1" height="2" fill="#FF00FF"/>
<rect x="278" y="365" width="1" height="1" fill="#FF00FF"/>
<rect x="278" y="366" width="1" height="1" fill="#FF00FF"/>
<rect x="279" y="366" width="1" height="4" fill="#FF00FF"/>
<rect x="280" y="364" width="1" height="5" fill="#FF00FF"/>
<rect x="280" y="365" width="1" height="1" fill="#FF00FF"/>
<rect x="281" y="365" width="1" height="1" fill="#FF00FF"/>
<rect x="282" y="366" width="1" height="3" fill="#FF00FF"/>
<rect x="282" y="369" width="1" height="1" fill="#FF00FF"/>
<rect x="283" y="366" width="1" height="2" fill="#FF00FF"/>
<rect x="284" y="367" width="1" height="1" fill="#FF00FF"/>
<rect x="284" y="368" width="1" height="1" fill="#FF00FF"/>
<rect x="285" y="364" width="1" height="3" fill="#FF00FF"/>
<rect x="286" y="365" width="1" height="3" fill="#FF00FF"/>
<rect x="286" y="368" width="1" height="1" fill="#FF00FF"/>
<rect x="287" y="367" width="1" height="1" fill="#FF00FF"/>
<rect x="288" y="367" width="1" height="1" fill="#FF00FF"/>
<rect x="288" y="368" width="1" height="1" fill="#FF00FF"/>
<rect x="289" y="366" width="1" height="1" fill="#FF00FF"/>
<rect x="290" y="367" width="1" height="1" fill="#FF00FF"/>
<rect x="290" y="368" width="1" height="1" fill="#FF00FF"/>
<rect x="291" y="365" width="1" height="2" fill="#FF00FF"/>
<rect x="292" y="365" width="1" height="1" fill="#FF00FF"/>
<rect x="292" y="366" width="1" height="1" fill="#FF00FF"/>
<rect x="293" y="366" width="1" height="4" fill="#FF00FF"/>
<rect x="294" y="368" width="1" height="1" fill="#FF00FF"/>
<rect x="294" y="369" width="1" height="1" fill="#FF00FF"/>
<rect x="295" y="367" width="1" height="1" fill="#FF00FF"/>
<rect x="296" y="364" width="1" height="3" fill="#FF00FF"/>
<rect x="296" y="365" width="1" height="1" fill="#FF00FF"/>
<rect x="297" y="365" width="1" height="2" fill="#FF00FF"/>
<rect x="298" y="365" width="1" height="1" fill="#FF00FF"/>
<rect x="298" y="366" width="1" height="1" fill="#FF00FF"/>
<rect x="299" y="364" width="1" height="1" fill="#FF00FF"/>
<rect x="300" y="363" width="1" height="1" fill="#FF00FF"/>
<rect x="300" y="364" width="1" height="1" fill="#FF00FF"/>
<rect x="301" y="364" width="1" height="6" fill="#FF00FF"/>
<rect x="302" y="367" width="1" height="2" fill="#FF00FF"/>
<rect x="302" y="368" width="1" height="1" fill="#FF00FF"/>
<rect x="303" y="365" width="1" height="2" fill="#FF00FF"/>
<rect x="304" y="364" width="1" height="1" fill="#FF00FF"/>
<rect x="304" y="365" width="1" height="1" fill="#FF00FF"/>
<rect x="305" y="365" width="1" height="4" fill="#FF00FF"/>
<rect x="306" y="363" width="1" height="5" fill="#FF00FF"/>
<rect x="306" y="364" width="1" height="1" fill="#FF00FF"/>
<rect x="307" y="364" width="1" height="2" fill="#FF00FF"/>
<rect x="308" y="364" width="1" height="1" fill="#FF00FF"/>
<rect x="308" y="365" width="1" height="1" fill="#FF00FF"/>
<rect x="309" y="365" width="1" height="2" fill="#FF00FF"/>
<rect x="310" y="367" width="1" height="1" fill="#FF00FF"/>
<rect x="310" y="368" width="1" height="1" fill="#FF00FF"/>
<rect x="311" y="366" width="1" height="1" fill="#FF00FF"/>
<rect x="312" y="364" width="1" height="2" fill="#FF00FF"/>
<rect x="312" y="365" width="1" height="1" fill="#FF00FF"/>
<rect x="313" y="365" width="1" height="1" fill="#FF00FF"/>
<rect x="314" y="365" width="1" height="1" fill="#FF00FF"/>
<rect x="314" y="366" width="1" height="1" fill="#FF00FF"/>
<rect x="315" y="362" width="1" height="3" fill="#FF00FF"/>
<rect x="316" y="362" width="1" height="1" fill="#FF00FF"/>
<rect x="316" y="363" width="1" height="1" fill="#FF00FF"/>
<rect x="317" y="363" width="1" height="5" fill="#FF00FF"/>
<rect x="318" y="365" width="1" height="2" fill="#FF00FF"/>
<rect x="318" y="366" width="1" height="1" fill="#FF00FF"/>
<rect x="319" y="362" width="1" height="3" fill="#FF00FF"/>
<rect x="320" y="363" width="1" height="4" fill="#FF00FF"/>
<rect x="320" y="367" width="1" height="1" fill="#FF00FF"/>
<rect x="321" y="363" width="1" height="3" fill="#FF00FF"/>
<rect x="322" y="364" width="1" height="1" fill="#FF00FF"/>
<rect x="322" y="365" width="1" height="1" fill="#FF00FF"/>
<rect x="323" y="359" width="1" height="5" fill="#FF00FF"/>
<rect x="324" y="360" width="1" height="7" fill="#FF00FF"/>
<rect x="324" y="367" width="1" height="1" fill="#FF00FF"/>
<rect x="325" y="365" width="1" height="1" fill="#FF00FF"/>
<rect x="326" y="363" width="1" height="2" fill="#FF00FF"/>
<rect x="326" y="364" width="1" height="1" fill="#FF00FF"/>
<rect x="327" y="364" width="1" height="1" fill="#FF00FF"/>
<rect x="328" y="362" width="1" height="2" fill="#FF00FF"/>
<rect x="328" y="363" width="1" height="1" fill="#FF00FF"/>
<rect x="329" y="363" width="1" height="4" fill="#FF00FF"/>
<rect x="330" y="366" width="1" height="1" fill="#FF00FF"/>
<rect x="330" y="367" width="1" height="1" fill="#FF00FF"/>
<rect x="331" y="365" width="1" height="1" fill="#FF00FF"/>
<rect x="332" y="366" width="1" height="2" fill="#FF00FF"/>
<rect x="332" y="368" width="1" height="1" fill="#FF00FF"/>
<rect x="333" y="368" width="1" height="1" fill="#FF00FF"/>
<rect x="334" y="363" width="1" height="5" fill="#FF00FF"/>
<rect x="334" y="364" width="1" height="1" fill="#FF00FF"/>
<rect x="335" y="362" width="1" height="1" fill="#FF00FF"/>
<rect x="336" y="363" width="1" height="1" fill="#FF00FF"/>
<rect x="336" y="364" width="1" height="1" fill="#FF00FF"/>
<rect x="337" y="364" width="1" height="1" fill="#FF00FF"/>
<rect x="338" y="363" width="1" height="1" fill="#FF00FF"/>
<rect x="338" y="364" width="1" height="1" fill="#FF00FF"/>
<rect x="339" y="363" width="1" height="1" fill="#FF00FF"/>
<rect x="340" y="364" width="1" height="2" fill="#FF00FF"/>
<rect x="340" y="366" width="1" height="1" fill="#FF00FF"/>
<rect x="341" y="364" width="1" height="1" fill="#FF00FF"/>
<rect x="342" y="363" width="1" height="1" fill="#FF00FF"/>
<rect x="342" y="364" width="1" height="1" fill="#FF00FF"/>
<rect x="343" y="364" width="1" height="1" fill="#FF00FF"/>
<rect x="344" y="364" width="1" height="1" fill="#FF00FF"/>
<rect x="344" y="365" width="1" height="1" fill="#FF00FF"/>
<rect x="345" y="363" width="1" height="1" fill="#FF00FF"/>
<rect x="346" y="362" width="1" height="1" fill="#FF00FF"/>
<rect x="346" y="363" width="1" height="1" fill="#FF00FF"/>
<rect x="347" y="362" width="1" height="1" fill="#FF00FF"/>
<rect x="348" y="363" width="1" height="3" fill="#FF00FF"/>
<rect x="348" y="366" width="1" height="1" fill="#FF00FF"/>
<rect x="349" y="364" width="1" height="1" fill="#FF00FF"/>
<rect x="350" y="362" width="1" height="2" fill="#FF00FF"/>
<rect x="350" y="363" width="1" height="1" fill="#FF00FF"/>
<rect x="351" y="363" width="1" height="2" fill="#FF00FF"/>
<rect x="352" y="364" width="1" height="1" fill="#FF00FF"/>
<rect x="352" y="365" width="1" height="1" fill="#FF00FF"/>
<rect x="353" y="363" width="1" height="1" fill="#FF00FF"/>
<rect x="354" y="363" width="1" height="1" fill="#FF00FF"/>
<rect x="354" y="364" width="1" height="1" fill="#FF00FF"/>
<rect x="355" y="362" width="1" height="1" fill="#FF00FF"/>
<rect x="356" y="360" width="1" height="2" fill="#FF00FF"/>
<rect x="356" y="361" width="1" height="1" fill="#FF00FF"/>
<rect x="357" y="361" width="1" height="3" fill="#FF00FF"/>
<rect x="358" y="363" width="1" height="1" fill="#FF00FF"/>
<rect x="358" y="364" width="1" height="1" fill="#FF00FF"/>
<rect x="359" y="363" width="1" height="1" fill="#FF00FF"/>
<rect x="360" y="362" width="1" height="1" fill="#FF00FF"/>
<rect x="360" y="363" width="1" height="1" fill="#FF00FF"/>
<rect x="361" y="363" width="1" height="1" fill="#FF00FF"/>
<rect x="362" y="364" width="1" height="1" fill="#FF00FF"/>
<rect x="362" y="365" width="1" height="1" fill="#FF00FF"/>
<rect x="363" y="361" width="1" height="3" fill="#FF00FF"/>
<rect x="364" y="362" width="1" height="2" fill="#FF00FF"/>
<rect x="364" y="364" width="1" height="1" fill="#FF00FF"/>
<rect x="365" y="363" width="1" height="1" fill="#FF00FF"/>
<rect x="366" y="362" width="1" height="1" fill="#FF00FF"/>
<rect x="366" y="363" width="1" height="1" fill="#FF00FF"/>
<rect x="367" y="363" width="1" height="4" fill="#FF00FF"/>
<rect x="368" y="357" width="1" height="9" fill="#FF00FF"/>
<rect x="368" y="358" width="1" height="1" fill="#FF00FF"/>
<rect x="369" y="358" width="1" height="8" fill="#FF00FF"/>
<rect x="370" y="364" width="1" height="1" fill="#FF00FF"/>
<rect x="370" y="365" width="1" height="1" fill="#FF00FF"/>
<rect x="371" y="365" width="1" height="3" fill="#FF00FF"/>
<rect x="372" y="363" width="1" height="4" fill="#FF00FF"/>
<rect x="372" y="364" width="1" height="1" fill="#FF00FF"/>
<rect x="373" y="361" width="1" height="2" fill="#FF00FF"/>
<rect x="374" y="362" width="1" height="2" fill="#FF00FF"/>
<rect x="374" y="364" width="1" height="1" fill="#FF00FF"/>
<rect x="375" y="361" width="1" height="2" fill="#FF00FF"/>
<rect x="376" y="362" width="1" height="4" fill="#FF00FF"/>
<rect x="376" y="366" width="1" height="1" fill="#FF00FF"/>
<rect x="377" y="364" width="1" height="1" fill="#FF00FF"/>
<rect x="378" y="364" width="1" height="1" fill="#FF00FF"/>
<rect x="378" y="365" width="1" height="1" fill="#FF00FF"/>
<rect x="379" y="362" width="1" height="2" fill="#FF00FF"/>
<rect x="380" y="362" width="1" height="1" fill="#FF00FF"/>
<rect x="380" y="363" width="1" height="1" fill="#FF00FF"/>
<rect x="381" y="361" width="1" height="1" fill="#FF00FF"/>
<rect x="382" y="362" width="1" height="1" fill="#FF00FF"/>
<rect x="382" y="363" width="1" height="1" fill="#FF00FF"/>
<rect x="383" y="362" width="1" height="1" fill="#FF00FF"/>
<rect x="384" y="363" width="1" height="2" fill="#FF00FF"/>
<rect x="384" y="365" width="1" height="1" fill="#FF00FF"/>
<rect x="385" y="364" width="1" height="1" fill="#FF00FF"/>
<rect x="386" y="363" width="1" height="1" fill="#FF00FF"/>
<rect x="386" y="364" width="1" height="1" fill="#FF00FF"/>
<rect x="387" y="364" width="1" height="1" fill="#FF00FF"/>
<rect x="388" y="364" width="1" height="1" fill="#FF00FF"/>
<rect x="388" y="365" width="1" height="1" fill="#FF00FF"/>
<rect x="389" y="362" width="1" height="2" fill="#FF00FF"/>
<rect x="390" y="363" width="1" height="2" fill="#FF00FF"/>
<rect x="390" y="365" width="1" height="1" fill="#FF00FF"/>
<rect x="391" y="359" width="1" height="5" fill="#FF00FF"/>
<rect x="392" y="360" width="1" height="1" fill="#FF00FF"/>
<rect x="392" y="361" width="1" height="1" fill="#FF00FF"/>
<rect x="393" y="359" width="1" height="1" fill="#FF00FF"/>
<rect x="394" y="360" width="1" height="4" fill="#FF00FF"/>
<rect x="394" y="364" width="1" height="1" fill="#FF00FF"/>
<rect x="395" y="362" width="1" height="1" fill="#FF00FF"/>
<rect x="396" y="362" width="1" height="1" fill="#FF00FF"/>
<rect x="396" y="363" width="1" height="1" fill="#FF00FF"/>
<rect x="397" y="362" width="1" height="1" fill="#FF00FF"/>
<rect x="398" y="361" width="1" height="1" fill="#FF00FF"/>
<rect x="398" y="362" width="1" height="1" fill="#FF00FF"/>
<rect x="399" y="362" width="1" height="1" fill="#FF00FF"/>
<rect x="400" y="361" width="1" height="1" fill="#FF00FF"/>
<rect x="400" y="362" width="1" height="1" fill="#FF00FF"/>
<rect x="401" y="361" width="1" height="1" fill="#FF00FF"/>
<rect x="402" y="361" width="1" height="1" fill="#FF00FF"/>
<rect x="402" y="362" width="1" height="1" fill="#FF00FF"/>
<rect x="403" y="361" width="1" height="1" fill="#FF00FF"/>
<rect x="404" y="362" width="1" height="3" fill="#FF00FF"/>
<rect x="404" y="365" width="1" height="1" fill="#FF00FF"/>
<rect x="405" y="364" width="1" height="1" fill="#FF00FF"/>
<rect x="406" y="362" width="1" height="2" fill="#FF00FF"/>
<rect x="406" y="363" width="1" height="1" fill="#FF00FF"/>
<rect x="407" y="363" width="1" height="2" fill="#FF00FF"/>
<rect x="408" y="361" width="1" height="3" fill="#FF00FF"/>
<rect x="408" y="362" width="1" height="1" fill="#FF00FF"/>
<rect x="409" y="362" width="1" height="3" fill="#FF00FF"/>
<rect x="410" y="362" width="1" height="2" fill="#FF00FF"/>
<rect x="410" y="363" width="1" height="1" fill="#FF00FF"/>
<rect x="411" y="362" width="1" height="1" fill="#FF00FF"/>
<rect x="412" y="363" width="1" height="4" fill="#FF00FF"/>
<rect x="412" y="367" width="1" height="1" fill="#FF00FF"/>
<rect x="413" y="362" width="1" height="4" fill="#FF00FF"/>
<rect x="414" y="361" width="1" height="1" fill="#FF00FF"/>
<rect x="414" y="362" width="1" height="1" fill="#FF00FF"/>
<rect x="415" y="362" width="1" height="4" fill="#FF00FF"/>
<rect x="416" y="363" width="1" height="2" fill="#FF00FF"/>
<rect x="416" y="364" width="1" height="1" fill="#FF00FF"/>
<rect x="417" y="361" width="1" height="2" fill="#FF00FF"/>
<rect x="418" y="362" width="1" height="2" fill="#FF00FF"/>
<rect x="418" y="364" width="1" height="1" fill="#FF00FF"/>
<rect x="419" y="361" width="1" height="2" fill="#FF00FF"/>
<rect x="420" y="361" width="1" height="1" fill="#FF00FF"/>
<rect x="420" y="362" width="1" height="1" fill="#FF00FF"/>
<rect x="421" y="362" width="1" height="4" fill="#FF00FF"/>
<rect x="422" y="361" width="1" height="4" fill="#FF00FF"/>
<rect x="422" y="362" width="1" height="1" fill="#FF00FF"/>
<rect x="423" y="361" width="1" height="1" fill="#FF00FF"/>
<rect x="424" y="362" width="1" height="1" fill="#FF00FF"/>
<rect x="424" y="363" width="1" height="1" fill="#FF00FF"/>
<rect x="425" y="362" width="1" height="1" fill="#FF00FF"/>
<rect x="426" y="360" width="1" height="2" fill="#FF00FF"/>
<rect x="426" y="361" width="1" height="1" fill="#FF00FF"/>
<rect x="427" y="361" width="1" height="4" fill="#FF00FF"/>
<rect x="428" y="365" width="1" height="4" fill="#FF00FF"/>
<rect x="428" y="369" width="1" height="1" fill="#FF00FF"/>
<rect x="429" y="361" width="1" height="7" fill="#FF00FF"/>
<rect x="430" y="361" width="1" height="1" fill="#FF00FF"/>
<rect x="430" y="362" width="1" height="1" fill="#FF00FF"/>
<rect x="431" y="362" width="1" height="2" fill="#FF00FF"/>
<rect x="432" y="363" width="1" height="1" fill="#FF00FF"/>
<rect x="432" y="364" width="1" height="1" fill="#FF00FF"/>
<rect x="433" y="363" width="1" height="1" fill="#FF00FF"/>
<rect x="434" y="361" width="1" height="2" fill="#FF00FF"/>
<rect x="434" y="362" width="1" height="1" fill="#FF00FF"/>
<rect x="435" y="361" width="1" height="1" fill="#FF00FF"/>
<rect x="436" y="362" width="1" height="1" fill="#FF00FF"/>
<rect x="436" y="363" width="1" height="1" fill="#FF00FF"/>
<rect x="437" y="362" width="1" height="1" fill="#FF00FF"/>
<rect x="438" y="363" width="1" height="2" fill="#FF00FF"/>
<rect x="438" y="365" width="1" height="1" fill="#FF00FF"/>
<rect x="439" y="362" width="1" height="2" fill="#FF00FF"/>
<rect x="440" y="362" width="1" height="1" fill="#FF00FF"/>
<rect x="440" y="363" width="1" height="1" fill="#FF00FF"/>
<rect x="441" y="361" width="1" height="1" fill="#FF00FF"/>
<rect x="442" y="361" width="1" height="1" fill="#FF00FF"/>
<rect x="442" y="362" width="1" height="1" fill="#FF00FF"/>
<rect x="443" y="362" width="1" height="2" fill="#FF00FF"/>
<rect x="444" y="361" width="1" height="2" fill="#FF00FF"/>
<rect x="444" y="362" width="1" height="1" fill="#FF00FF"/>
<rect x="445" y="362" width="1" height="1" fill="#FF00FF"/>
<rect x="446" y="363" width="1" height="1" fill="#FF00FF"/>
<rect x="446" y="364" width="1" height="1" fill="#FF00FF"/>
<rect x="447" y="361" width="1" height="2" fill="#FF00FF"/>
<rect x="448" y="362" width="1" height="3" fill="#FF00FF"/>
<rect x="448" y="365" width="1" height="1" fill="#FF00FF"/>
<rect x="449" y="360" width="1" height="4" fill="#FF00FF"/>
<rect x="450" y="361" width="1" height="4" fill="#FF00FF"/>
<rect x="450" y="365" width="1" height="1" fill="#FF00FF"/>
<rect x="451" y="364" width="1" height="1" fill="#FF00FF"/>
<rect x="452" y="361" width="1" height="3" fill="#FF00FF"/>
<rect x="452" y="362" width="1" height="1" fill="#FF00FF"/>
<rect x="452" y="293" width="1" height="127" fill="#D0D0D0"/>
<rect x="452" y="420" width="1" height="6" fill="#00FF00"/>
</svg>
<span class="t" style="right:603.00px;top:124px;">100</span>
<span class="t" style="right:603.00px;top:151px;">80</span>
<span class="t" style="right:603.00px;top:178px;">60</span>
<span class="t" style="right:603.00px;top:204px;">40</span>
<span class="t" style="right:603.00px;top:231px;">20</span>
<span class="t" style="left:470.5px;top:124px;">16</span>
<span class="t" style="left:470.5px;top:141px;">14</span>
<span class="t" style="left:470.5px;top:158px;">12</span>
<span class="t" style="left:470.5px;top:174px;">10</span>
<span class="t" style="left:470.5px;top:191px;">8</span>
<span class="t" style="left:470.5px;top:207px;">6</span>
<span class="t" style="left:470.5px;top:224px;">4</span>
<span class="t" style="left:470.5px;top:241px;">2</span>
<span class="t" style="right:603.00px;top:286px;">20</span>
<span class="t" style="left:470.5px;top:286px;">20</span>
<span class="t" style="right:603.00px;top:313px;">16</span>
<span class="t" style="left:470.5px;top:313px;">16</span>
<span class="t" style="right:603.00px;top:340px;">12</span>
<span class="t" style="left:470.5px;top:340px;">12</span>
<span class="t" style="right:603.00px;top:366px;">8</span>
<span class="t" style="left:470.5px;top:366px;">8</span>
<span class="t" style="right:603.00px;top:393px;">4</span>
<span class="t" style="left:470.5px;top:393px;">4</span>
<span class="t" style="left:-49.60px;width:200px;text-align:center;top:268px;">0.0</span>
<span class="t" style="left:-49.60px;width:200px;text-align:center;top:430px;">0.0</span>
<span class="t" style="left:-3.60px;width:200px;text-align:center;top:268px;">0.5</span>
<span class="t" style="left:-3.60px;width:200px;text-align:center;top:430px;">0.5</span>
<span class="t" style="left:42.40px;width:200px;text-align:center;top:268px;">1.0</span>
<span class="t" style="left:42.40px;width:200px;text-align:center;top:430px;">1.0</span>
<span class="t" style="left:89.40px;width:200px;text-align:center;top:268px;">1.5</span>
<span class="t" style="left:89.40px;width:200px;text-align:center;top:430px;">1.5</span>
<span class="t" style="left:135.40px;width:200px;text-align:center;top:268px;">2.0</span>
<span class="t" style="left:135.40px;width:200px;text-align:center;top:430px;">2.0</span>
<span class="t" style="left:182.40px;width:200px;text-align:center;top:268px;">2.5</span>
<span class="t" style="left:182.40px;width:200px;text-align:center;top:430px;">2.5</span>
<span class="t" style="left:228.40px;width:200px;text-align:center;top:268px;">3.0</span>
<span class="t" style="left:228.40px;width:200px;text-align:center;top:430px;">3.0</span>
<span class="t" style="left:274.40px;width:200px;text-align:center;top:268px;">3.5</span>
<span class="t" style="left:274.40px;width:200px;text-align:center;top:430px;">3.5</span>
<span class="t" style="left:321.40px;width:200px;text-align:center;top:268px;">4.0</span>
<span class="t" style="left:321.40px;width:200px;text-align:center;top:430px;">4.0</span>
<span class="t" style="left:368.00px;width:200px;text-align:center;top:268px;">4.5</span>
<span class="t" style="left:368.00px;width:200px;text-align:center;top:430px;">4.5</span>
<div class="gw" style="left:492px;top:126px;width:139px;height:82px"></div>
<div class="gg" style="left:491px;top:125px;width:139px;height:82px"></div>
<span class="t gt" style="left:498px;top:120px;padding:0 2px;letter-spacing:-0.02px;">Disk-Info</span>
<span class="t" style="left:499px;top:133px;letter-spacing:-0.15px;">Typ:</span>
<span class="t nv" style="left:545px;top:133px;letter-spacing:-0.22px;">DVD+R</span>
<span class="t" style="left:499px;top:151px;letter-spacing:-0.42px;">ID:</span>
<span class="t nv" style="left:545px;top:151px;letter-spacing:-0.37px;">MCC 004</span>
<span class="t" style="left:499px;top:169px;letter-spacing:-0.39px;">Datum:</span>
<span class="t nv" style="left:545px;top:169px;letter-spacing:-0.15px;">28 Mar 2004</span>
<span class="t" style="left:499px;top:187px;letter-spacing:-0.30px;">Label:</span>
<div class="gw" style="left:492px;top:217px;width:139px;height:202px"></div>
<div class="gg" style="left:491px;top:216px;width:139px;height:202px"></div>
<span class="t gt" style="left:498px;top:210px;padding:0 2px;letter-spacing:-0.24px;">Einstellungen</span>
<div class="sk " style="left:500px;top:225px;width:84px;height:21px;"></div>
<span class="t" style="left:504px;top:230px;letter-spacing:-0.11px;">4 X CLV</span>
<div class="rb " style="left:566px;top:227px;width:16px;height:17px;"><div class="arr" style="left:3px;top:6px"></div></div>
<div class="rb " style="left:592px;top:224px;width:23px;height:23px;"><svg class="r" style="left:3px;top:2px" width="14" height="16" viewBox="0 0 14 16">
<rect x="0.5" y="0.5" width="13" height="15" fill="#fff" stroke="#000" shape-rendering="crispEdges"/>
<path d="M3.5 7.6 V5.4 Q3.5 4.4 4.6 4.4 H7" stroke="#008000" stroke-width="1.1" fill="none"/><path d="M6.4 1.9 L9.3 4.4 L6.4 7 Z" fill="#008000"/>
<path d="M10.5 8.3 V10.6 Q10.5 11.6 9.4 11.6 H7.4" stroke="#008000" stroke-width="1.1" fill="none"/><path d="M7.8 9 L4.9 11.6 L7.8 14.1 Z" fill="#008000"/></svg></div>
<span class="t" style="left:502px;top:256px;letter-spacing:-0.17px;">Start:</span>
<div class="sk " style="left:554px;top:251px;width:60px;height:20px;"></div>
<span class="t" style="left:557px;top:255px;letter-spacing:-0.20px;">0000 MB</span>
<span class="t" style="left:502px;top:279px;letter-spacing:-0.09px;">Ende:</span>
<div class="sk " style="left:554px;top:274px;width:60px;height:20px;"></div>
<span class="t" style="left:557px;top:278px;letter-spacing:-0.20px;">4464 MB</span>
<div class="sk " style="left:502px;top:296px;width:13px;height:13px;background:#fff"></div>
<span class="t" style="left:520px;top:297px;letter-spacing:-0.10px;">Schnelles Scannen</span>
<div class="sk " style="left:502px;top:314px;width:13px;height:13px;background:#fff"><svg class="r" style="left:2px;top:2px" width="7" height="7" viewBox="0 0 7 7" shape-rendering="crispEdges"><path d="M0 2h1v3h-1zM1 3h1v3h-1zM2 4h1v3h-1zM3 3h1v3h-1zM4 2h1v3h-1zM5 1h1v3h-1zM6 0h1v3h-1z" fill="#000"/></svg></div>
<span class="t" style="left:520px;top:315px;letter-spacing:-0.06px;">C1/PIE anzeigen</span>
<div class="sk " style="left:502px;top:330px;width:13px;height:13px;background:#fff"><svg class="r" style="left:2px;top:2px" width="7" height="7" viewBox="0 0 7 7" shape-rendering="crispEdges"><path d="M0 2h1v3h-1zM1 3h1v3h-1zM2 4h1v3h-1zM3 3h1v3h-1zM4 2h1v3h-1zM5 1h1v3h-1zM6 0h1v3h-1z" fill="#000"/></svg></div>
<span class="t" style="left:520px;top:330px;letter-spacing:-0.07px;">C2/PIF anzeigen</span>
<div class="sk " style="left:502px;top:345px;width:13px;height:13px;background:#fff"><svg class="r" style="left:2px;top:2px" width="7" height="7" viewBox="0 0 7 7" shape-rendering="crispEdges"><path d="M0 2h1v3h-1zM1 3h1v3h-1zM2 4h1v3h-1zM3 3h1v3h-1zM4 2h1v3h-1zM5 1h1v3h-1zM6 0h1v3h-1z" fill="#000"/></svg></div>
<span class="t" style="left:520px;top:345px;letter-spacing:-0.20px;">Jitter anzeigen</span>
<div class="sk " style="left:502px;top:361px;width:13px;height:13px;background:#fff"><svg class="r" style="left:2px;top:2px" width="7" height="7" viewBox="0 0 7 7" shape-rendering="crispEdges"><path d="M0 2h1v3h-1zM1 3h1v3h-1zM2 4h1v3h-1zM3 3h1v3h-1zM4 2h1v3h-1zM5 1h1v3h-1zM6 0h1v3h-1z" fill="#000"/></svg></div>
<span class="t" style="left:520px;top:361px;letter-spacing:-0.08px;">Zeige Lesegeschw.</span>
<div class="sk " style="left:502px;top:376px;width:13px;height:13px;background:#D4D0C8"><svg class="r" style="left:2px;top:2px" width="7" height="7" viewBox="0 0 7 7" shape-rendering="crispEdges"><path d="M0 2h1v3h-1zM1 3h1v3h-1zM2 4h1v3h-1zM3 3h1v3h-1zM4 2h1v3h-1zM5 1h1v3h-1zM6 0h1v3h-1z" fill="#808080"/></svg></div>
<span class="t" style="left:521px;top:377px;color:#fff;letter-spacing:-0.10px;">Zeige Schreibgeschw.</span>
<span class="t" style="left:520px;top:376px;color:#808080;letter-spacing:-0.10px;">Zeige Schreibgeschw.</span>
<div class="rb " style="left:527px;top:393px;width:98px;height:23px;"></div>
<span class="t" style="left:475.90px;width:200px;text-align:center;top:398px;letter-spacing:-0.20px;">Erweitert</span>
<div class="gw" style="left:492px;top:427px;width:139px;height:25px"></div>
<div class="gg" style="left:491px;top:426px;width:139px;height:25px"></div>
<span class="t" style="left:502px;top:433px;letter-spacing:-0.28px;">Qualitätsindex:</span>
<span class="t nv" style="right:23.88px;top:433px;letter-spacing:0.12px;">88</span>
<div class="gw" style="left:492px;top:458px;width:139px;height:55px"></div>
<div class="gg" style="left:491px;top:457px;width:139px;height:55px"></div>
<span class="t" style="left:502px;top:467px;letter-spacing:-0.26px;">Fortschritt:</span>
<span class="t nv" style="right:23.32px;top:467px;letter-spacing:-0.32px;">100 %</span>
<span class="t" style="left:502px;top:482px;letter-spacing:-0.26px;">Position:</span>
<span class="t nv" style="right:24.19px;top:482px;letter-spacing:-0.19px;">4463 MB</span>
<span class="t" style="left:502px;top:498px;letter-spacing:-0.15px;">Geschwindigkeit:</span>
<span class="t nv" style="right:23.02px;top:498px;letter-spacing:-0.02px;">4.00 X</span>
<div class="gw" style="left:15px;top:459px;width:146px;height:55px"></div>
<div class="gg" style="left:14px;top:458px;width:146px;height:55px"></div>
<span class="t gt" style="left:22px;top:452px;width:13px;height:13px"></span>
<div class="r" style="left:24px;top:454px;width:8px;height:8px;box-sizing:border-box;border:1px solid #000;background:#00FFFF"></div>
<span class="t gt" style="left:33px;top:452px;padding:0 2px;letter-spacing:-0.32px;">PI Errors</span>
<span class="t" style="left:22px;top:468px;letter-spacing:-0.05px;">Durchschnitt</span>
<span class="t nv" style="right:493.98px;top:468px;letter-spacing:0.02px;">7.24</span>
<span class="t" style="left:22px;top:483px;letter-spacing:-0.47px;">Maximum:</span>
<span class="t nv" style="right:493.73px;top:483px;letter-spacing:0.27px;">60</span>
<span class="t" style="left:22px;top:498px;letter-spacing:-0.41px;">Gesamt:</span>
<span class="t nv" style="right:494.04px;top:498px;letter-spacing:-0.04px;">129184</span>
<div class="gw" style="left:173px;top:459px;width:146px;height:55px"></div>
<div class="gg" style="left:172px;top:458px;width:146px;height:55px"></div>
<span class="t gt" style="left:180px;top:452px;width:13px;height:13px"></span>
<div class="r" style="left:182px;top:454px;width:8px;height:8px;box-sizing:border-box;border:1px solid #000;background:#FFFF00"></div>
<span class="t gt" style="left:191px;top:452px;padding:0 2px;letter-spacing:-0.26px;">PI Failures</span>
<span class="t" style="left:181px;top:468px;letter-spacing:-0.05px;">Durchschnitt</span>
<span class="t nv" style="right:334.28px;top:468px;letter-spacing:0.22px;">0.02</span>
<span class="t" style="left:181px;top:483px;letter-spacing:-0.47px;">Maximum:</span>
<span class="t nv" style="right:334.08px;top:483px;letter-spacing:0.42px;">17</span>
<span class="t" style="left:181px;top:498px;letter-spacing:-0.41px;">Gesamt:</span>
<span class="t nv" style="right:334.37px;top:498px;letter-spacing:0.13px;">2780</span>
<div class="gw" style="left:332px;top:459px;width:147px;height:41px"></div>
<div class="gg" style="left:331px;top:458px;width:147px;height:41px"></div>
<span class="t gt" style="left:339px;top:452px;width:13px;height:13px"></span>
<div class="r" style="left:341px;top:454px;width:8px;height:8px;box-sizing:border-box;border:1px solid #000;background:#FF00FF"></div>
<span class="t gt" style="left:350px;top:452px;padding:0 2px;letter-spacing:-0.22px;">Jitter</span>
<span class="t" style="left:340px;top:468px;letter-spacing:-0.05px;">Durchschnitt</span>
<span class="t nv" style="right:176.03px;top:468px;letter-spacing:-0.23px;">8.46 %</span>
<span class="t" style="left:340px;top:483px;letter-spacing:-0.47px;">Maximum:</span>
<span class="t nv" style="right:175.84px;top:483px;letter-spacing:-0.04px;">10.5 %</span>
<span class="t" style="left:340px;top:502px;letter-spacing:-0.25px;">PO Ausfälle:</span>
<span class="t nv" style="right:176.00px;top:502px;">0</span>
</body></html>
